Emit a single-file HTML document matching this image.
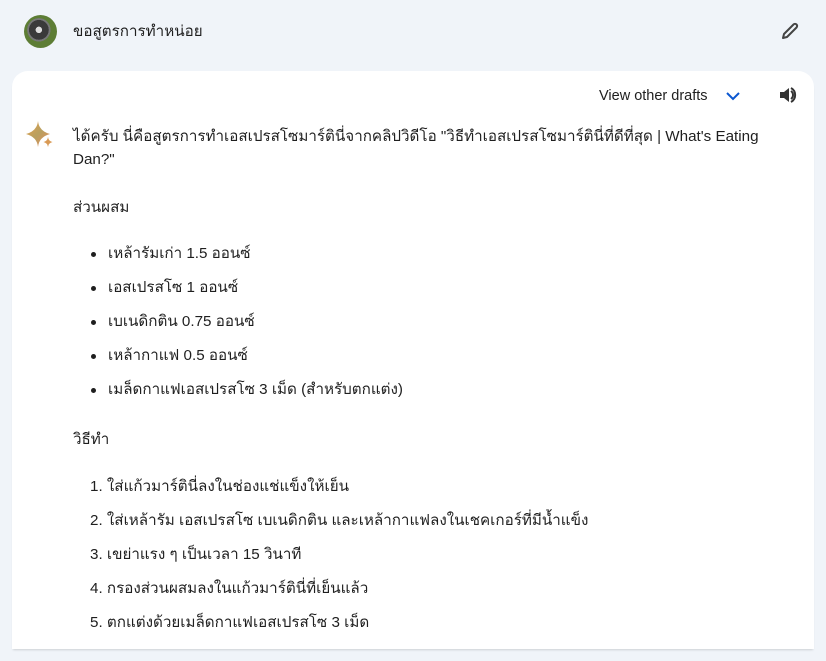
<!DOCTYPE html>
<html><head><meta charset="utf-8"><style>
body{margin:0;width:826px;height:661px;background:#f0f4f9;font-family:"Liberation Sans","Noto Sans CJK SC",sans-serif;color:#1f1f1f;position:relative;overflow:hidden}
.a{position:absolute;white-space:nowrap;font-size:15.2px;line-height:20px}
.card{position:absolute;left:12px;top:71px;width:802px;height:578px;background:#fff;border-radius:16px 16px 0 0;box-shadow:0 2px 2px -1px rgba(0,0,0,.15)}
.dot{position:absolute;width:5px;height:5px;border-radius:50%;background:#1f1f1f}
</style></head><body>
<div style="position:absolute;left:24px;top:15px;width:33px;height:33px;border-radius:50%;background:radial-gradient(ellipse at 45% 45%,#ddd 0 12%,#3a3a3a 13% 38%,#777 39% 45%,#5d7d35 46%)"></div>
<div class="a" style="left:73px;top:22px">ขอสูตรการทำหน่อย</div>
<svg style="position:absolute;left:780px;top:21px" width="20" height="20" viewBox="0 0 20 20"><path d="M3 17l1-4 9.5-9.5a2 2 0 0 1 3 3L7 16z" fill="none" stroke="#444" stroke-width="2" stroke-linejoin="round"/></svg>
<div class="card"></div>
<div class="a" style="left:599px;top:86px;font-size:14.5px">View other drafts</div>
<svg style="position:absolute;left:725px;top:90px" width="16" height="12" viewBox="0 0 16 12"><path d="M2 3l6 6 6-6" fill="none" stroke="#0b57d0" stroke-width="2"/></svg>
<svg style="position:absolute;left:778px;top:85px" width="20" height="20" viewBox="0 0 20 20"><path d="M2 7h4l5-4v14l-5-4H2z" fill="#333"/><path d="M13 6a5 5 0 0 1 0 8M13 3a8 8 0 0 1 0 14" fill="none" stroke="#333" stroke-width="2"/></svg>
<svg style="position:absolute;left:25px;top:120px" width="30" height="30" viewBox="0 0 30 30"><defs><linearGradient id="g" x1="0" y1="0" x2="1" y2="1"><stop offset="0" stop-color="#e8a04a"/><stop offset=".5" stop-color="#b8a060"/><stop offset="1" stop-color="#e88a5a"/></linearGradient></defs><path d="M13 1q1 10 12 13q-11 3-12 13q-1-10-12-13q11-3 12-13z" fill="url(#g)"/><path d="M23 17q.5 4 4.5 5q-4 1-4.5 5q-.5-4-4.5-5q4-1 4.5-5z" fill="#d99a55"/></svg>
<div class="a" style="left:73px;top:125px;width:700px;white-space:normal;line-height:23px">ได้ครับ นี่คือสูตรการทำเอสเปรสโซมาร์ตินี่จากคลิปวิดีโอ "วิธีทำเอสเปรสโซมาร์ตินี่ที่ดีที่สุด | What's Eating Dan?"</div>
<div class="a" style="left:73px;top:198px">ส่วนผสม</div>
<div class="dot" style="left:91px;top:252px"></div><div class="a" style="left:108px;top:244px">เหล้ารัมเก่า 1.5 ออนซ์</div>
<div class="dot" style="left:91px;top:286px"></div><div class="a" style="left:108px;top:278px">เอสเปรสโซ 1 ออนซ์</div>
<div class="dot" style="left:91px;top:320px"></div><div class="a" style="left:108px;top:312px">เบเนดิกติน 0.75 ออนซ์</div>
<div class="dot" style="left:91px;top:354px"></div><div class="a" style="left:108px;top:346px">เหล้ากาแฟ 0.5 ออนซ์</div>
<div class="dot" style="left:91px;top:388px"></div><div class="a" style="left:108px;top:380px">เมล็ดกาแฟเอสเปรสโซ 3 เม็ด (สำหรับตกแต่ง)</div>
<div class="a" style="left:73px;top:430px">วิธีทำ</div>
<div class="a" style="left:90px;top:477px">1. ใส่แก้วมาร์ตินี่ลงในช่องแช่แข็งให้เย็น</div>
<div class="a" style="left:90px;top:511px">2. ใส่เหล้ารัม เอสเปรสโซ เบเนดิกติน และเหล้ากาแฟลงในเชคเกอร์ที่มีน้ำแข็ง</div>
<div class="a" style="left:90px;top:545px">3. เขย่าแรง ๆ เป็นเวลา 15 วินาที</div>
<div class="a" style="left:90px;top:579px">4. กรองส่วนผสมลงในแก้วมาร์ตินี่ที่เย็นแล้ว</div>
<div class="a" style="left:90px;top:613px">5. ตกแต่งด้วยเมล็ดกาแฟเอสเปรสโซ 3 เม็ด</div>
</body></html>
